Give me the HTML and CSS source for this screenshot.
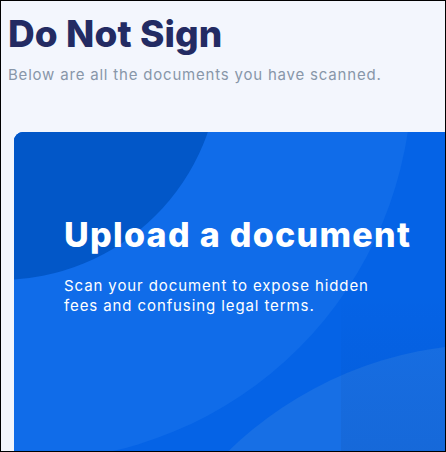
FILE: index.html
```html
<!DOCTYPE html>
<html>
<head>
<title>Do Not Sign</title>
<link rel="stylesheet" href="styles.css">
</head>
<body>
<div class="frame">
    <header class="page-head">
        <h1 class="page-title">Do Not Sign</h1>
        <p class="page-sub">Below are all the documents you have scanned.</p>
    </header>

    <section class="upload-card">
        <div class="blob blob-big"></div>
        <div class="blob blob-dark"></div>
        <div class="blob blob-low"></div>
        <div class="shade"></div>
        <div class="upload-text">
            <h2 class="upload-title">Upload a document</h2>
            <p class="upload-desc">Scan your document to expose hidden fees and confusing legal terms.</p>
        </div>
    </section>
</div>
</body>
</html>
```

FILE: styles.css
```css
* {
    box-sizing: border-box;
}

body {
    margin: 0;
    font-family: "Inter", "Noto Sans", sans-serif;
}

.frame {
    width: 446px;
    height: 452px;
    border: 1px solid #000;
    background-color: #f3f6fd;
    overflow: hidden;
}

.page-head {
    padding: 10px 0 0 7px;
}

.page-title {
    margin: 0;
    font-size: 37px;
    line-height: 46px;
    font-weight: 800;
    letter-spacing: 0.1px;
    color: #232b63;
}

.page-sub {
    margin: 8px 0 0;
    font-size: 15px;
    line-height: 20px;
    letter-spacing: 0.8px;
    color: #8896a9;
}

.upload-card {
    position: relative;
    margin: 47px 0 0 13px;
    width: 460px;
    height: 340px;
    border-radius: 9px 0 0 0;
    background-color: #0563e6;
    overflow: hidden;
}

.blob {
    position: absolute;
    border-radius: 50%;
}

/* big lighter disc behind the text */
.blob-big {
    left: -374px;
    top: -443px;
    width: 772px;
    height: 772px;
    background-color: #106ce9;
}

.blob-dark {
    left: -234px;
    top: -292px;
    width: 440px;
    height: 440px;
    background-color: #0257c8;
}

.blob-low {
    left: 100px;
    top: 212px;
    width: 756px;
    height: 756px;
    background-color: #176fe5;
}

.shade {
    position: absolute;
    left: 327px;
    top: 160px;
    right: 0;
    bottom: 0;
    background: linear-gradient(to bottom, rgba(10, 20, 60, 0), rgba(10, 20, 60, 0.08));
}

.upload-text {
    position: relative;
    padding: 83px 0 0 50px;
    color: #fff;
}

.upload-title {
    margin: 0;
    font-size: 34px;
    line-height: 40px;
    font-weight: 800;
    letter-spacing: 1.3px;
}

.upload-desc {
    margin: 21px 0 0;
    width: 330px;
    font-size: 15px;
    line-height: 20px;
    letter-spacing: 0.9px;
}
```
